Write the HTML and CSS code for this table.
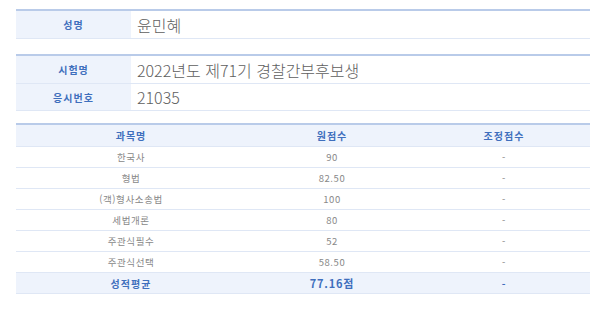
FILE: index.html
```html
<!DOCTYPE html>
<html lang="ko">
<head>
<meta charset="utf-8">
<link rel="stylesheet" href="styles.css">
</head>
<body>
<div class="wrap">
  <table class="info">
    <tr><th>성명</th><td>윤민혜</td></tr>
  </table>
  <table class="info second">
    <tr><th>시험명</th><td>2022년도 제71기 경찰간부후보생</td></tr>
    <tr class="short"><th>응시번호</th><td>21035</td></tr>
  </table>
  <table class="score">
    <colgroup><col class="c1"><col class="c2"><col class="c3"></colgroup>
    <thead>
      <tr><th>과목명</th><th>원점수</th><th>조정점수</th></tr>
    </thead>
    <tbody>
      <tr><td>한국사</td><td>90</td><td>-</td></tr>
      <tr><td>형법</td><td>82.50</td><td>-</td></tr>
      <tr><td>(객)형사소송법</td><td>100</td><td>-</td></tr>
      <tr><td>세법개론</td><td>80</td><td>-</td></tr>
      <tr><td>주관식필수</td><td>52</td><td>-</td></tr>
      <tr><td>주관식선택</td><td>58.50</td><td>-</td></tr>
      <tr class="avg"><td>성적평균</td><td>77.16점</td><td>-</td></tr>
    </tbody>
  </table>
</div>
</body>
</html>
```
FILE: styles.css
```css
html, body {
  margin: 0;
  padding: 0;
  background: #ffffff;
}
body {
  font-family: "Noto Sans CJK KR", "Noto Sans", sans-serif;
}
.wrap {
  padding: 9px 0 0 16px;
  width: 574px;
}
table {
  border-collapse: collapse;
  width: 574px;
  table-layout: fixed;
}
.info {
  border-top: 2px solid #b9cbe9;
}
.info th {
  width: 115px;
  background: #eef3fc;
  color: #3f6fbd;
  font-size: 10px;
  font-weight: bold;
  letter-spacing: 1px;
  height: 27px;
  padding: 0;
  border-bottom: 1px solid #dfe7f5;
  text-align: center;
}
.info td {
  padding: 0 0 0 6px;
  font-size: 16px;
  font-weight: 300;
  color: #5e5e5e;
  border-bottom: 1px solid #dfe7f5;
  height: 27px;
  line-height: 20px;
}
.info .short th, .info .short td {
  height: 26px;
}
.second {
  margin-top: 15px;
}
.score {
  margin-top: 12px;
  border-top: 2px solid #b9cbe9;
}
.c1 { width: 230px; }
.c2 { width: 172px; }
.c3 { width: 172px; }
.score th {
  background: #eef3fc;
  color: #3f6fbd;
  font-size: 10px;
  font-weight: bold;
  letter-spacing: 1px;
  height: 21px;
  padding: 0;
  text-align: center;
  border-bottom: 1px solid #dfe7f5;
}
.score td {
  text-align: center;
  font-size: 9.5px;
  letter-spacing: 0.6px;
  color: #888888;
  height: 20px;
  padding: 0;
  border-bottom: 1px solid #dfe7f5;
}
.score .avg td {
  background: #eef3fc;
  color: #3f6fbd;
  font-weight: bold;
  font-size: 10px;
  letter-spacing: 1px;
}
.score .avg td:nth-child(2) {
  font-size: 11px;
  letter-spacing: 0.8px;
}
```
